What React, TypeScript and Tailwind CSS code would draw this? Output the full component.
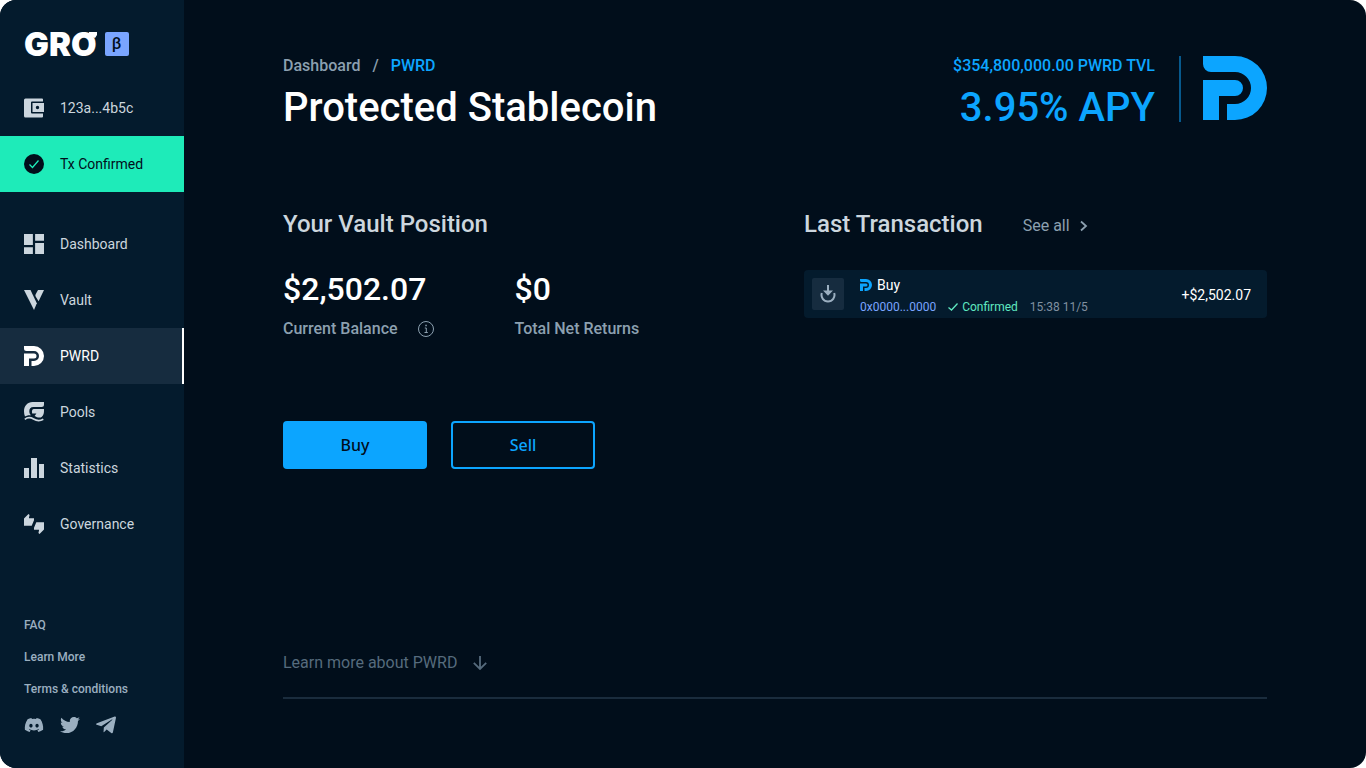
import React from 'react';
import { FaDiscord, FaTelegramPlane, FaTwitter } from 'react-icons/fa';

interface IconProps {
  className?: string;
}

const PwrdIcon = ({ className }: IconProps) => (
  <svg viewBox="0 0 64 64" fill="currentColor" className={className} aria-hidden="true">
    <path d="M0 0H32A32 32 0 0 1 32 64H24V48H32A16 16 0 0 0 32 16H8A8 8 0 0 1 0 8Z" />
    <path d="M0 24H32A8 8 0 0 1 32 40H16V64H0Z" />
  </svg>
);

const WalletIcon = ({ className }: IconProps) => (
  <svg viewBox="0 0 20 20" fill="currentColor" className={className} aria-hidden="true">
    <path d="M1.500 .5H18A1 1 0 0 1 19 1.500V3.500H8A1 1 0 0 0 7 4.500V14.500A1 1 0 0 0 8 15.500H19V18.500A1 1 0 0 1 18 19.500H1.500A1.500 1.500 0 0 1 0 18V2A1.500 1.500 0 0 1 1.500 .5Z" />
    <path
      fillRule="evenodd"
      d="M8.500 5H20V14H8.500ZM13.500 7.800a1.700 1.700 0 1 0 0 3.400a1.700 1.700 0 0 0 0-3.400Z"
    />
  </svg>
);

const DashboardIcon = ({ className }: IconProps) => (
  <svg viewBox="3 3 18 18" fill="currentColor" className={className} aria-hidden="true">
    <path d="M3 13h8V3H3v10zm0 8h8v-6H3v6zm10 0h8V11h-8v10zm0-18v6h8V3h-8z" />
  </svg>
);

const VaultIcon = ({ className }: IconProps) => (
  <svg viewBox="0 0 20 20" fill="currentColor" className={className} aria-hidden="true">
    <path d="M0 0H6.500L12.800 13.200L10 20Z" />
    <path d="M14 0H20L14.600 11.200L11.800 6.800C11.200 5.800 11.300 4.800 11.800 4Z" />
  </svg>
);

const PoolsIcon = ({ className }: IconProps) => (
  <svg viewBox="0 0 20 20" fill="currentColor" className={className} aria-hidden="true">
    <path d="M8.500 0H20V2.500A2.500 2.500 0 0 1 17.500 5H9.500C6.500 5 5.300 7 5.300 9.200C5.300 11 6 12.400 7 13.300C4.600 12.900 2.400 13.500 1 14.600C.3 13 0 11 0 9.200C0 4 3.500 0 8.500 0Z" />
    <path d="M10 7H20V9C20 12.600 18.500 15.400 15.800 15.600C13.800 15.700 12.200 14.700 10.600 13.900L12.400 11.500H8.200C7.500 9 8.200 7 10 7Z" />
    <path
      d="M.8 17.300C4 14.800 6.500 15.300 9.500 17C12.800 18.900 15.500 19.400 19.300 17.200"
      fill="none"
      stroke="currentColor"
      strokeWidth="1.700"
    />
  </svg>
);

const StatisticsIcon = ({ className }: IconProps) => (
  <svg viewBox="0 0 20 20" fill="currentColor" className={className} aria-hidden="true">
    <path d="M0 10H5V20H0ZM7 0H13V20H7ZM15 6H20V20H15Z" />
  </svg>
);

const GovernanceIcon = ({ className }: IconProps) => (
  <svg viewBox="0 0 24 24" fill="currentColor" className={className} aria-hidden="true">
    <path d="M12 5H5.820L6.700 1.200L5.380 0L0 5.380V14H9.240L12 7.540Z" />
    <path d="M14.760 10L12 16.460V19H18.180L17.300 22.800L18.620 24L24 18.620V10Z" />
  </svg>
);

const CheckCircleIcon = ({ className }: IconProps) => (
  <svg viewBox="0 0 20 20" className={className} aria-hidden="true">
    <circle cx="10" cy="10" r="10" fill="#010e1b" />
    <path d="M5.500 10.500L8.500 13.500L14.500 6.500" fill="none" stroke="#1eebb9" strokeWidth="1.300" />
  </svg>
);

const ReceiveIcon = ({ className }: IconProps) => (
  <svg viewBox="0 0 16 18" fill="none" className={className} aria-hidden="true">
    <path d="M8 0V7" stroke="currentColor" strokeWidth="2" />
    <path d="M3 5.500H13L8 10.800Z" fill="currentColor" />
    <path d="M1.800 8A6.500 6.500 0 1 0 14.200 8" stroke="currentColor" strokeWidth="2" />
  </svg>
);

const InfoIcon = ({ className }: IconProps) => (
  <svg viewBox="0 0 16 16" fill="none" stroke="currentColor" className={className} aria-hidden="true">
    <circle cx="8" cy="8" r="7.500" />
    <path d="M6.800 7H8.300V11.500M6.500 11.500H9.800" />
    <path d="M7.300 4.500H8.800" strokeWidth="1.600" />
  </svg>
);

const navItems = [
  { label: 'Dashboard', icon: DashboardIcon },
  { label: 'Vault', icon: VaultIcon },
  { label: 'PWRD', icon: PwrdIcon, active: true },
  { label: 'Pools', icon: PoolsIcon },
  { label: 'Statistics', icon: StatisticsIcon },
  { label: 'Governance', icon: GovernanceIcon },
];

const footerLinks = ['FAQ', 'Learn More', 'Terms & conditions'];

const socials = [
  { label: 'Discord', icon: FaDiscord, viewBox: '0 0 640 512' },
  { label: 'Twitter', icon: FaTwitter, viewBox: '0 0 512 512' },
  { label: 'Telegram', icon: FaTelegramPlane, viewBox: '0 32 448 448' },
];

const Sidebar = () => (
  <aside className="flex w-[184px] shrink-0 flex-col bg-[#041b2d] pt-8 pb-[33px] text-sm text-[#ccd6de]">
    <a href="#" className="flex h-6 items-center gap-2 px-6">
      <span className="relative font-[Inter] text-[33px] leading-6 font-black text-white">
        GRO
        <svg viewBox="0 0 8 8" className="absolute top-0 right-0 size-2" aria-hidden="true">
          <path d="M0 0H8V3L6 6L0 3Z" fill="white" />
        </svg>
      </span>
      <span className="flex size-6 items-center justify-center rounded-xs bg-[#7aa5ff] text-base font-medium text-[#010e1b]">
        β
      </span>
    </a>

    <button className="mt-6 flex h-14 items-center gap-4 px-6">
      <WalletIcon className="size-5" />
      123a...4b5c
    </button>
    <div className="flex h-14 items-center gap-4 bg-[#1eebb9] px-6 text-[#010e1b]">
      <CheckCircleIcon className="size-5" />
      Tx Confirmed
    </div>

    <nav className="mt-6">
      {navItems.map(({ label, icon: Icon, active }) => (
        <a
          key={label}
          href="#"
          className={`flex h-14 items-center gap-4 px-6 ${
            active ? 'border-r-2 border-white bg-[#162c3f] text-white' : ''
          }`}
        >
          <Icon className="size-5" />
          {label}
        </a>
      ))}
    </nav>

    <div className="mt-auto px-6 text-xs font-medium text-[#9bafc0]">
      {footerLinks.map((link) => (
        <a key={link} href="#" className="flex h-8 items-center">
          {link}
        </a>
      ))}
      <div className="mt-[10px] flex gap-4">
        {socials.map(({ label, icon: Icon, viewBox }) => (
          <a key={label} href="#" aria-label={label}>
            <Icon viewBox={viewBox} className="size-5" />
          </a>
        ))}
      </div>
    </div>
  </aside>
);

const PageHeader = () => (
  <header className="flex h-[66px] justify-between font-medium">
    <div>
      <div className="flex h-5 items-center gap-3 text-base text-[#8ca0b0]">
        <a href="#">Dashboard</a>
        <span>/</span>
        <span className="text-[#0ca5ff]">PWRD</span>
      </div>
      <h1 className="mt-2 text-[40px] leading-12 text-white">Protected Stablecoin</h1>
    </div>
    <div className="flex text-[#0ca5ff]">
      <div className="h-[66px] border-r-2 border-[#07598d] pr-6 text-right">
        <p className="h-5 text-base leading-5">$354,800,000.00 PWRD TVL</p>
        <p className="mt-2 text-[40px] leading-12">3.95% APY</p>
      </div>
      <PwrdIcon className="ml-[22px] size-16" />
    </div>
  </header>
);

const VaultPosition = () => (
  <section className="font-medium">
    <h2 className="text-2xl text-[#ccd6de]">Your Vault Position</h2>
    <dl className="mt-[25px] grid grid-cols-2 text-base text-[#8ca0b0]">
      <div className="flex flex-col-reverse">
        <dt className="mt-1 flex items-center gap-5">
          Current Balance
          <InfoIcon className="size-4" />
        </dt>
        <dd className="text-[32px] leading-12 text-white">$2,502.07</dd>
      </div>
      <div className="flex flex-col-reverse">
        <dt className="mt-1">Total Net Returns</dt>
        <dd className="text-[32px] leading-12 text-white">$0</dd>
      </div>
    </dl>
    <div className="mt-20 flex gap-6 font-['Noto_Sans']">
      <button className="h-12 w-36 rounded-sm bg-[#0ca5ff] pb-px text-base text-[#010e1b]">Buy</button>
      <button className="h-12 w-36 rounded-sm border-2 border-[#0ca5ff] pb-px text-base text-[#0ca5ff]">
        Sell
      </button>
    </div>
  </section>
);

const LastTransaction = () => (
  <section>
    <div className="flex items-center gap-10">
      <h2 className="text-2xl font-medium text-[#ccd6de]">Last Transaction</h2>
      <a href="#" className="flex items-center gap-[10px] pt-1 text-base text-[#8ca0b0]">
        See all
        <svg viewBox="0 0 8 12" className="h-3 w-2" fill="none" aria-hidden="true">
          <path d="M1 1.500L6 6L1 10.500" stroke="currentColor" strokeWidth="1.800" />
        </svg>
      </a>
    </div>
    <div className="mt-[30px] flex h-12 items-center rounded-sm bg-[#041b2d] pr-4 pl-2">
      <div className="flex size-8 items-center justify-center rounded-xs bg-[#162c3f] text-[#9bafc0]">
        <ReceiveIcon className="h-[18px] w-4" />
      </div>
      <div className="ml-4 pt-[2px]">
        <div className="flex items-center gap-[5px] text-sm text-white">
          <PwrdIcon className="size-3 text-[#0ca5ff]" />
          Buy
        </div>
        <div className="mt-1 flex items-center gap-3 text-xs">
          <a href="#" className="text-[#7aa5ff]">0x0000...0000</a>
          <span className="flex items-center gap-1 text-[#5fe8c0]">
            <svg viewBox="0 0 10 8" className="h-2 w-[10px]" fill="none" aria-hidden="true">
              <path d="M.5 4.500L3.500 7L9.500 .5" stroke="currentColor" strokeWidth="1.300" />
            </svg>
            Confirmed
          </span>
          <span className="text-[#8090a0]">15:38 11/5</span>
        </div>
      </div>
      <span className="ml-auto pt-[2px] text-sm text-white">+$2,502.07</span>
    </div>
  </section>
);

export default function App() {
  return (
    <div className="bg-white font-[Roboto,sans-serif]">
      <div className="flex min-h-screen overflow-hidden rounded-2xl bg-[#010e1b]">
        <Sidebar />
        <main className="flex grow flex-col px-8 pt-14 pb-[69px]">
          <div className="mx-auto flex w-full max-w-[984px] grow flex-col">
            <PageHeader />
            <div className="mt-[86px] grid grid-cols-2 gap-[58px]">
              <VaultPosition />
              <LastTransaction />
            </div>
            <a
              href="#"
              className="mt-auto flex items-center gap-4 border-b-2 border-[#1a2c3d] pb-[22px] text-base text-[#566b7d]"
            >
              Learn more about PWRD
              <svg viewBox="0 0 14 14" className="size-[14px]" fill="none" aria-hidden="true">
                <path d="M7 0V12.500M.8 6.800L7 13L13.200 6.800" stroke="currentColor" strokeWidth="1.800" />
              </svg>
            </a>
          </div>
        </main>
      </div>
    </div>
  );
}
